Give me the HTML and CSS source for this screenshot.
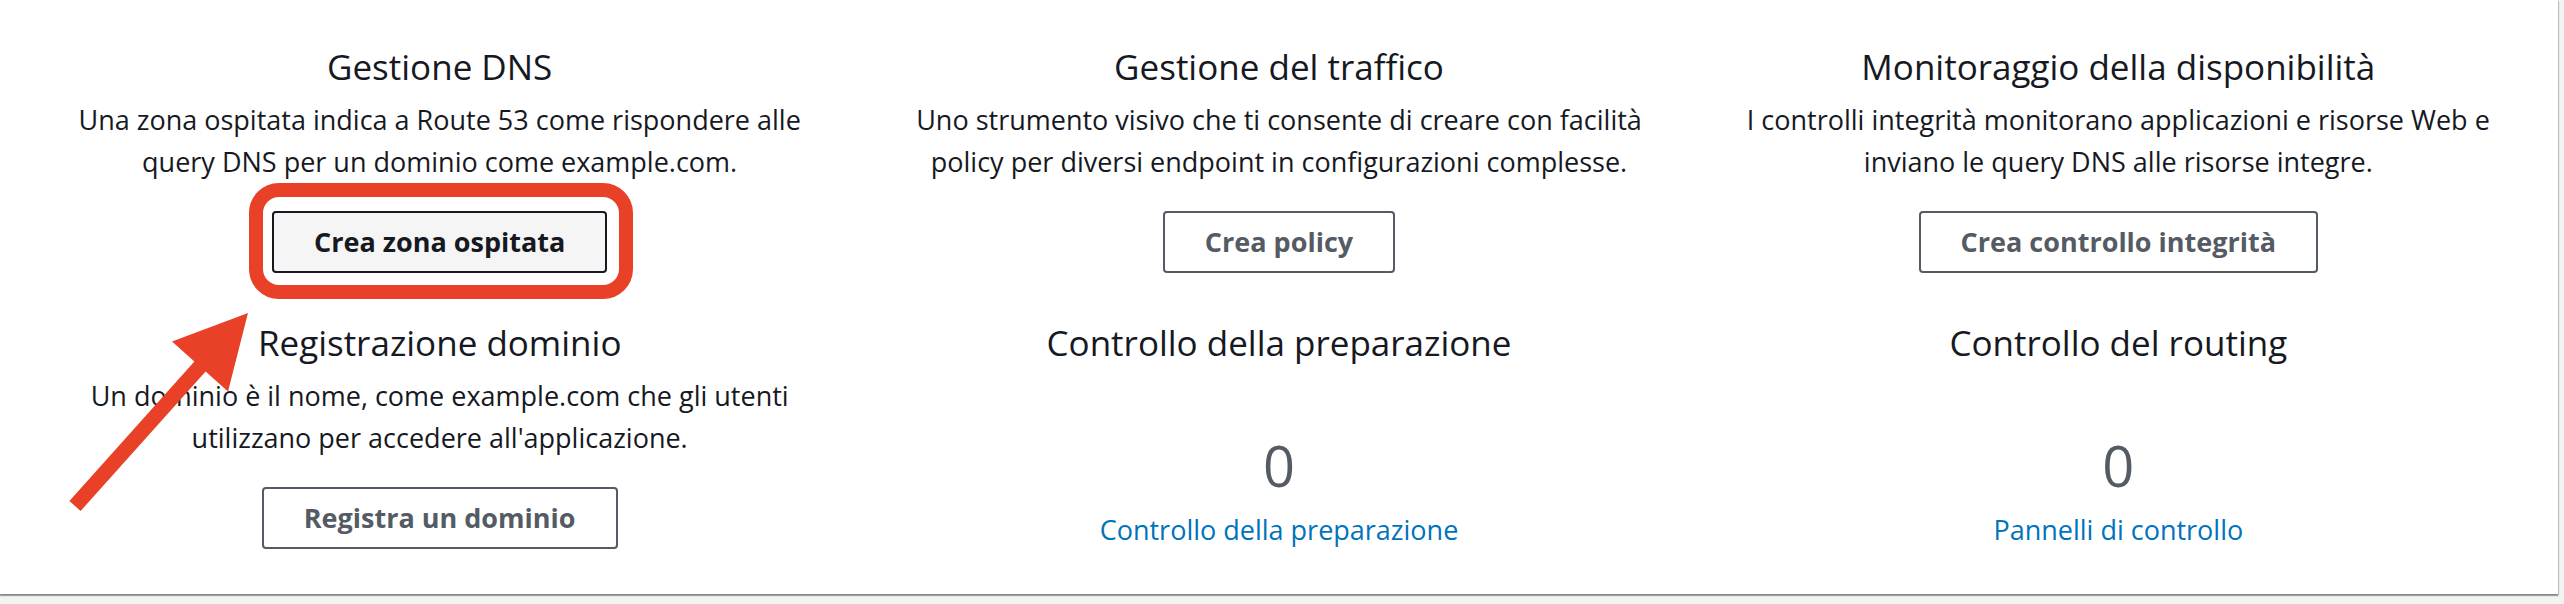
FILE: index.html
```html
<!DOCTYPE html>
<html lang="it">
<head>
<meta charset="utf-8">
<title>Route 53</title>
<link rel="stylesheet" href="styles.css">
</head>
<body>
<div class="panel">
  <div class="grid">
    <section class="cell">
      <h3 class="title">Gestione DNS</h3>
      <p class="desc">Una zona ospitata indica a Route 53 come rispondere alle query DNS per un dominio come example.com.</p>
      <div class="btn-wrap">
        <button class="btn btn-focus">Crea zona ospitata</button>
        <span class="highlight"></span>
      </div>
    </section>
    <section class="cell">
      <h3 class="title">Gestione del traffico</h3>
      <p class="desc">Uno strumento visivo che ti consente di creare con facilità policy per diversi endpoint in configurazioni complesse.</p>
      <div class="btn-wrap">
        <button class="btn">Crea policy</button>
      </div>
    </section>
    <section class="cell">
      <h3 class="title">Monitoraggio della disponibilità</h3>
      <p class="desc">I controlli integrità monitorano applicazioni e risorse Web e inviano le query DNS alle risorse integre.</p>
      <div class="btn-wrap">
        <button class="btn">Crea controllo integrità</button>
      </div>
    </section>
    <section class="cell">
      <h3 class="title">Registrazione dominio</h3>
      <p class="desc">Un dominio è il nome, come example.com che gli utenti utilizzano per accedere all'applicazione.</p>
      <div class="btn-wrap">
        <button class="btn">Registra un dominio</button>
      </div>
    </section>
    <section class="cell">
      <h3 class="title">Controllo della preparazione</h3>
      <div class="count">0</div>
      <a class="link" href="#">Controllo della preparazione</a>
    </section>
    <section class="cell">
      <h3 class="title">Controllo del routing</h3>
      <div class="count">0</div>
      <a class="link" href="#">Pannelli di controllo</a>
    </section>
  </div>
  <svg class="arrow" width="300" height="600" viewBox="0 0 300 600" aria-hidden="true">
    <polygon points="69.4,501 194.4,361.5 172,341.4 248,313 228,391.6 205.6,371.5 80.6,511" fill="#e94128"/>
  </svg>
</div>
</body>
</html>
```

FILE: styles.css
```css
* {
  box-sizing: border-box;
}

html, body {
  margin: 0;
  padding: 0;
}

body {
  background: #f2f3f3;
  font-family: "Open Sans", "Noto Sans", sans-serif;
  color: #16191f;
  width: 2564px;
  height: 604px;
  overflow: hidden;
}

.panel {
  position: relative;
  width: 2558px;
  background: #ffffff;
  padding: 44px 40px 45px;
  box-shadow: 0 2px 1px 0 rgba(0, 28, 36, 0.35), 1px 1px 1px 0 rgba(0, 28, 36, 0.2);
}

.grid {
  display: grid;
  grid-template-columns: repeat(3, 1fr);
  column-gap: 40px;
  row-gap: 47px;
  align-items: start;
}

.cell {
  display: flex;
  flex-direction: column;
  align-items: center;
  text-align: center;
}

.title {
  margin: 0;
  font-size: 35px;
  line-height: 46px;
  font-weight: 400;
  color: #16191f;
}

.desc {
  margin: 9px 0 0;
  max-width: 780px;
  font-size: 27px;
  line-height: 42px;
  color: #16191f;
}

.btn-wrap {
  position: relative;
  margin-top: 28px;
}

.btn {
  display: block;
  font-family: "Open Sans", "Noto Sans", sans-serif;
  font-size: 27px;
  font-weight: 700;
  line-height: 42px;
  padding: 8px 40px;
  border: 2px solid #545b64;
  border-radius: 4px;
  background: #ffffff;
  color: #545b64;
}

.btn-focus {
  border-color: #16191f;
  background: #f5f5f5;
  color: #16191f;
}

.highlight {
  position: absolute;
  top: -28px;
  left: -23px;
  right: -26px;
  bottom: -26px;
  border: 14px solid #e94128;
  border-radius: 30px;
  pointer-events: none;
}

.count {
  margin-top: 71px;
  font-size: 56px;
  line-height: 56px;
  color: #545b64;
}

.link {
  margin-top: 18px;
  font-size: 27px;
  line-height: 38px;
  color: #0073bb;
  text-decoration: none;
}

.arrow {
  position: absolute;
  left: 0;
  top: 0;
  pointer-events: none;
}
```
